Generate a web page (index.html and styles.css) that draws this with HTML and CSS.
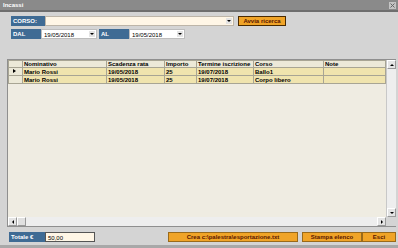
FILE: index.html
```html
<!DOCTYPE html>
<html lang="it">
<head>
  <meta charset="UTF-8">
  <title>Incassi</title>
  <link rel="stylesheet" href="styles.css">
</head>
<body>
  <div class="window">
    <div class="titlebar">
      <span class="title">Incassi</span>
      <span class="close">
        <svg width="7" height="7" viewBox="0 0 7 7"><path d="M1.5 1.5 L5.5 5.5 M5.5 1.5 L1.5 5.5" stroke="#666" stroke-width="1"/></svg>
      </span>
    </div>

    <div class="filters">
      <div class="row">
        <span class="label label-corso">CORSO:</span>
        <div class="field field-corso"><span class="arrow"></span></div>
        <button class="btn btn-search">Avvia ricerca</button>
      </div>
      <div class="row">
        <span class="label label-date">DAL</span>
        <div class="field field-date">19/05/2018<span class="arrow"></span></div>
        <span class="label label-date">AL</span>
        <div class="field field-date">19/05/2018<span class="arrow"></span></div>
      </div>
    </div>

    <div class="grid">
      <div class="grid-main">
        <div class="grid-body">
          <table>
            <tr class="head">
              <td class="ind"></td>
              <td class="c-nome">Nominativo</td>
              <td class="c-scad">Scadenza rata</td>
              <td class="c-imp">Importo</td>
              <td class="c-term">Termine iscrizione</td>
              <td class="c-corso">Corso</td>
              <td class="c-note">Note</td>
            </tr>
            <tr class="data">
              <td class="ind"><span class="pointer"></span></td>
              <td>Mario Rossi</td>
              <td>19/05/2018</td>
              <td>25</td>
              <td>19/07/2018</td>
              <td>Ballo1</td>
              <td></td>
            </tr>
            <tr class="data">
              <td class="ind"></td>
              <td>Mario Rossi</td>
              <td>19/05/2018</td>
              <td>25</td>
              <td>19/07/2018</td>
              <td>Corpo libero</td>
              <td></td>
            </tr>
          </table>
        </div>
        <div class="vscroll">
          <span class="sbtn"><span class="tri up"></span></span>
          <span class="strack"></span>
          <span class="sbtn"><span class="tri down"></span></span>
        </div>
      </div>
      <div class="hscroll">
        <span class="sbtn"><span class="tri left"></span></span>
        <span class="thumb"></span>
        <span class="strack"></span>
        <span class="sbtn"><span class="tri right"></span></span>
        <span class="corner"></span>
      </div>
    </div>

    <div class="footer">
      <span class="label label-tot">Totale €</span>
      <div class="field field-tot">50,00</div>
      <div class="spacer"></div>
      <button class="btn btn-crea">Crea c:\palestra\esportazione.txt</button>
      <button class="btn btn-stampa">Stampa elenco</button>
      <button class="btn btn-esci">Esci</button>
    </div>
  </div>
</body>
</html>
```

FILE: styles.css
```css
body {
  margin: 0;
  font-family: "Liberation Sans", Arial, sans-serif;
  font-size: 6px;
  font-weight: bold;
  background: #d4d4d4;
}
.window {
  width: 398px;
  height: 248px;
  background: #d4d4d4;
  display: flex;
  flex-direction: column;
  box-sizing: border-box;
  border-bottom: 3px solid #a8a8a8;
  overflow: hidden;
}
.titlebar {
  height: 10px;
  background: #8a8a8a;
  border-bottom: 2px solid #6e6e6e;
  display: flex;
  align-items: center;
  justify-content: space-between;
  padding: 0 2px 0 3px;
}
.title {
  color: #fff;
  font-size: 6px;
}
.close {
  display: flex;
  width: 7px;
  height: 7px;
  background: #c4c4c4;
  align-items: center;
  justify-content: center;
}
.filters {
  padding: 4px 0 0 11px;
}
.row {
  display: flex;
  align-items: center;
  height: 10px;
  margin-bottom: 3px;
}
.label {
  background: #3f6b94;
  color: #fff;
  height: 10px;
  line-height: 10px;
  padding-left: 2px;
  box-sizing: border-box;
}
.label-corso {
  width: 34px;
}
.label-date {
  width: 30px;
}
.field {
  position: relative;
  height: 10px;
  line-height: 10px;
  box-sizing: border-box;
  font-weight: normal;
  padding-left: 2px;
  color: #000;
}
.field-corso {
  width: 189px;
  background: #fff6e6;
  border: 1px solid #bdb5a8;
}
.field-date {
  width: 56px;
  background: #fff;
  border: 1px solid #bdbdbd;
  margin-right: 2px;
}
.arrow {
  position: absolute;
  right: 1px;
  top: 1px;
  width: 6px;
  height: 6px;
  background: #e4e4e4;
}
.arrow::after {
  content: "";
  position: absolute;
  left: 1px;
  top: 2px;
  border-left: 2px solid transparent;
  border-right: 2px solid transparent;
  border-top: 2px solid #000;
}
.btn {
  font-family: "Liberation Sans", Arial, sans-serif;
  font-size: 6px;
  font-weight: bold;
  color: #5a1500;
  background: #f0a428;
  border: 1px solid #9a6a1a;
  height: 10px;
  padding: 0;
  line-height: 8px;
}
.btn-search {
  width: 48px;
  margin-left: 4px;
  border-color: #4a2a00;
}
.grid {
  margin: 17px 2px 0 7px;
  height: 168px;
  display: flex;
  flex-direction: column;
  background: #efece2;
  border: 1px solid #8f8f8f;
  border-right: none;
  box-sizing: border-box;
}
.grid-main {
  flex: 1;
  display: flex;
  min-height: 0;
}
.grid-body {
  flex: 1;
}
table {
  border-collapse: collapse;
  width: 378px;
  table-layout: fixed;
}
td {
  height: 7px;
  padding: 0 0 0 1px;
  border: 1px solid #a8a594;
  line-height: 6px;
  white-space: nowrap;
  overflow: hidden;
}
tr.head td {
  background: #ece9d8;
  height: 5px;
}
tr.data td {
  background: #f0e4ae;
}
tr.data td.ind,
tr.head td.ind {
  background: #ece9d8;
}
.ind {
  width: 12px;
  position: relative;
}
.c-nome { width: 82px; }
.c-scad { width: 56px; }
.c-imp { width: 30px; }
.c-term { width: 55px; }
.c-corso { width: 68px; }
.pointer {
  position: absolute;
  left: 4px;
  top: 1px;
  border-top: 2px solid transparent;
  border-bottom: 2px solid transparent;
  border-left: 3px solid #000;
}
.vscroll {
  width: 10px;
  display: flex;
  flex-direction: column;
  background: #e8e8e8;
  border-left: 1px solid #c8c8c8;
}
.strack {
  flex: 1;
  background: #eeeeee;
}
.sbtn {
  width: 9px;
  height: 9px;
  background: #e4e4e4;
  border: 1px solid #fff;
  border-right-color: #999;
  border-bottom-color: #999;
  box-sizing: border-box;
  display: flex;
  align-items: center;
  justify-content: center;
}
.tri {
  width: 0;
  height: 0;
}
.tri.up {
  border-left: 2px solid transparent;
  border-right: 2px solid transparent;
  border-bottom: 2px solid #000;
}
.tri.down {
  border-left: 2px solid transparent;
  border-right: 2px solid transparent;
  border-top: 2px solid #000;
}
.tri.left {
  border-top: 2px solid transparent;
  border-bottom: 2px solid transparent;
  border-right: 2px solid #000;
}
.tri.right {
  border-top: 2px solid transparent;
  border-bottom: 2px solid transparent;
  border-left: 2px solid #000;
}
.hscroll {
  height: 9px;
  display: flex;
  background: #eeeeee;
}
.thumb {
  width: 9px;
  background: #e0e0e0;
  border: 1px solid #fff;
  border-right-color: #999;
  border-bottom-color: #999;
  box-sizing: border-box;
}
.corner {
  width: 10px;
  background: #d4d4d4;
}
.footer {
  display: flex;
  align-items: center;
  margin: 5px 2px 0 9px;
}
.label-tot {
  width: 36px;
  height: 10px;
}
.field-tot {
  width: 50px;
  background: #fff6e6;
  border: 1px solid #555;
}
.spacer {
  flex: 1;
}
.btn-crea {
  width: 130px;
  margin-right: 4px;
}
.btn-stampa {
  width: 60px;
}
.btn-esci {
  width: 34px;
}
```
